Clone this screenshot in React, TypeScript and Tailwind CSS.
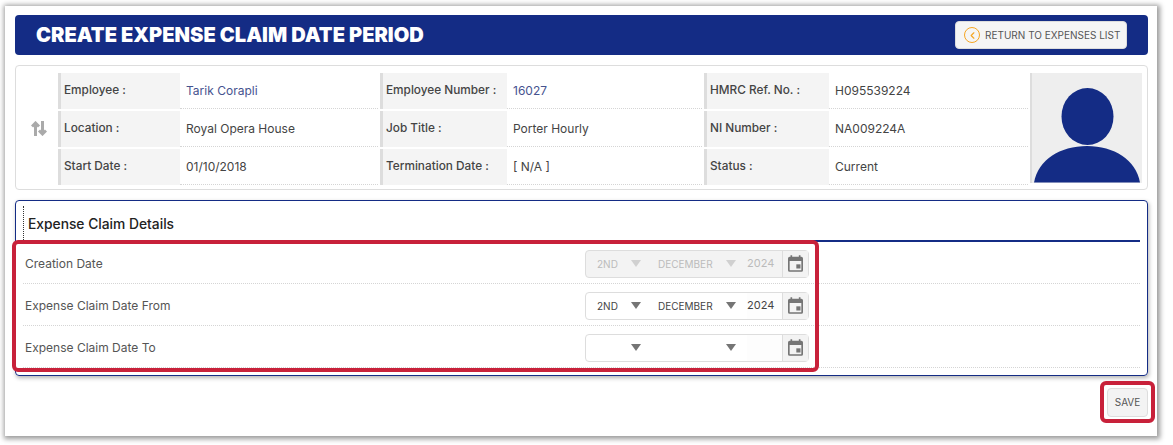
import { ChevronLeft } from "lucide-react";

const rows = [
  [
    ["Employee :", "Tarik Corapli", "text-[#46538f]"],
    ["Employee Number :", "16027", "text-[#46538f]"],
    ["HMRC Ref. No. :", "H095539224", "text-[#444]"],
  ],
  [
    ["Location :", "Royal Opera House", "text-[#444]"],
    ["Job Title :", "Porter Hourly", "text-[#444]"],
    ["NI Number :", "NA009224A", "text-[#444]"],
  ],
  [
    ["Start Date :", "01/10/2018", "text-[#444]"],
    ["Termination Date :", "[ N/A ]", "text-[#444]"],
    ["Status :", "Current", "text-[#444]"],
  ],
];

const labelWidths = ["w-[122px]", "w-[127px]", "w-[125px]"];
const valueWidths = ["w-[198px]", "w-[195px]", "w-[199px]"];

function CalendarIcon() {
  return (
    <svg width="15" height="17" viewBox="0 0 18 20" fill="#757575">
      <path d="M3 0h2v2h8V0h2v2h1a2 2 0 0 1 2 2v14a2 2 0 0 1-2 2H2a2 2 0 0 1-2-2V4a2 2 0 0 1 2-2h1V0zM2 7v11h14V7H2z" />
      <rect x="10" y="11" width="5" height="5" />
    </svg>
  );
}

function Caret({ light }: { light?: boolean }) {
  return <span className={`h-0 w-0 border-x-[5px] border-t-[7px] border-x-transparent ${light ? "border-t-[#d0d0d0]" : "border-t-[#757575]"}`} />;
}

function DateField({ day, month, year, disabled }: { day?: string; month?: string; year?: string; disabled?: boolean }) {
  return (
    <div className={`flex h-[28px] w-[224px] rounded-sm border border-[#ddd] text-[10px] ${disabled ? "bg-[#f3f3f3] text-[#bbb]" : "bg-white text-[#444]"}`}>
      <div className="flex w-[66px] items-center pl-[11px]">
        <span className="w-[34px] pt-[1px]">{day}</span>
        <Caret light={disabled} />
      </div>
      <div className="flex w-[95px] items-center pl-[6px]">
        <span className="w-[68px] pt-[1px]">{month}</span>
        <Caret light={disabled} />
      </div>
      <div className={`flex w-[35px] items-center text-[11px] ${disabled ? "" : "bg-[#fdfdfd]"}`}>{year}</div>
      <div className="flex flex-1 items-center justify-center border-l border-[#ddd] bg-[#f3f3f3]">
        <CalendarIcon />
      </div>
    </div>
  );
}

function ClaimRow({ label, children }: { label: string; children: React.ReactNode }) {
  return (
    <div className="flex h-[42px] items-center justify-between border-b border-dotted border-[#d5d5d5] pl-[2px] pr-[331px] pt-[2px]">
      <span className="text-[12px] text-[#555]">{label}</span>
      {children}
    </div>
  );
}

export default function App() {
  return (
    <div className="relative h-[445px] w-[1173px] overflow-hidden bg-white font-['Inter',sans-serif]">
      <div className="ml-[5px] mt-[6px] h-[430px] w-[1152px] bg-white pl-[10px] pr-[9px] pt-[9px] shadow-[1px_1px_5px_2px_rgba(0,0,0,0.4)]">
        <div className="flex h-[40px] items-center justify-between rounded-sm bg-[#142c85] pl-[21px] pr-[21px]">
          <h1 className="pt-[1px] text-[20.1px] font-black text-white">CREATE EXPENSE CLAIM DATE PERIOD</h1>
          <button className="flex h-[28px] w-[172px] items-center gap-[5px] rounded-sm border border-[#ddd] bg-[#f5f5f5] pl-[8px] text-[10px] text-[#555]">
            <span className="flex h-[16px] w-[16px] items-center justify-center rounded-full border-[1.5px] border-[#f5a623]">
              <ChevronLeft size={11} strokeWidth={2.5} className="text-[#f5a623]" />
            </span>
            RETURN TO EXPENSES LIST
          </button>
        </div>

        <div className="mt-[10px] flex h-[125px] items-start rounded-sm border border-[#ddd] pt-[7px]">
          <div className="flex h-[110px] w-[42px] items-center justify-center pl-[4px]">
            <svg width="16" height="15" viewBox="0 0 16 15" fill="none" stroke="#aaa" strokeWidth="3">
              <path d="M4.500 15V2M1 5.500l3.500-3.500L8 5.500M11.500 0v13M8 9.500l3.500 3.500L15 9.500" />
            </svg>
          </div>
          <div className="flex w-[972px] flex-col gap-[2px]">
            {rows.map((row, i) => (
              <div key={i} className="flex h-[36px] gap-[2px]">
                {row.map((cell, j) => (
                  <div key={j} className="flex">
                    <div className={`flex items-center border-l-[3px] border-[#ddd] bg-[#f4f4f4] pb-[1px] pl-[3px] text-[11.8px] font-medium text-[#444] ${labelWidths[j]}`}>{cell[0]}</div>
                    <div className={`flex items-center border-b border-dotted border-[#d5d5d5] pl-[6px] pt-[1px] text-[12px] ${valueWidths[j]} ${cell[2]}`}>{cell[1]}</div>
                  </div>
                ))}
              </div>
            ))}
          </div>
          <div className="h-[110px] w-[112px] overflow-hidden border-l-2 border-[#ddd] bg-[#eee]">
            <svg width="110" height="110" viewBox="0 0 110 110" fill="#142c85">
              <ellipse cx="55.500" cy="43.500" rx="26" ry="28.500" />
              <path d="M2 109.500C6 87 28 73 55 73s49 14 53 36.500z" />
            </svg>
          </div>
        </div>

        <div className="mt-[10px] h-[176px] rounded-sm border border-[#142c85] px-[7px] pt-[8px] shadow-[1px_2px_4px_rgba(0,0,0,0.3)]">
          <div className="flex h-[33px] items-center border-b-2 border-[#142c85] pb-[1px]">
            <span className="border-l border-dotted border-[#333] py-[8px] pl-[4px] text-[13.8px] font-medium text-[#222]">Expense Claim Details</span>
          </div>
          <ClaimRow label="Creation Date">
            <DateField day="2ND" month="DECEMBER" year="2024" disabled />
          </ClaimRow>
          <ClaimRow label="Expense Claim Date From">
            <DateField day="2ND" month="DECEMBER" year="2024" />
          </ClaimRow>
          <ClaimRow label="Expense Claim Date To">
            <DateField />
          </ClaimRow>
        </div>

        <div className="mt-[12px] flex justify-end">
          <button className="h-[29px] w-[41px] rounded-sm border border-[#ddd] bg-[#f3f3f3] text-[10px] text-[#555]">SAVE</button>
        </div>
      </div>

      <div className="absolute left-[12px] top-[240px] h-[132px] w-[807px] rounded-[6px] border-[4px] border-[#c8213a]" />
      <div className="absolute left-[1100px] top-[381px] h-[42px] w-[55px] rounded-[6px] border-[4px] border-[#c8213a]" />
    </div>
  );
}
